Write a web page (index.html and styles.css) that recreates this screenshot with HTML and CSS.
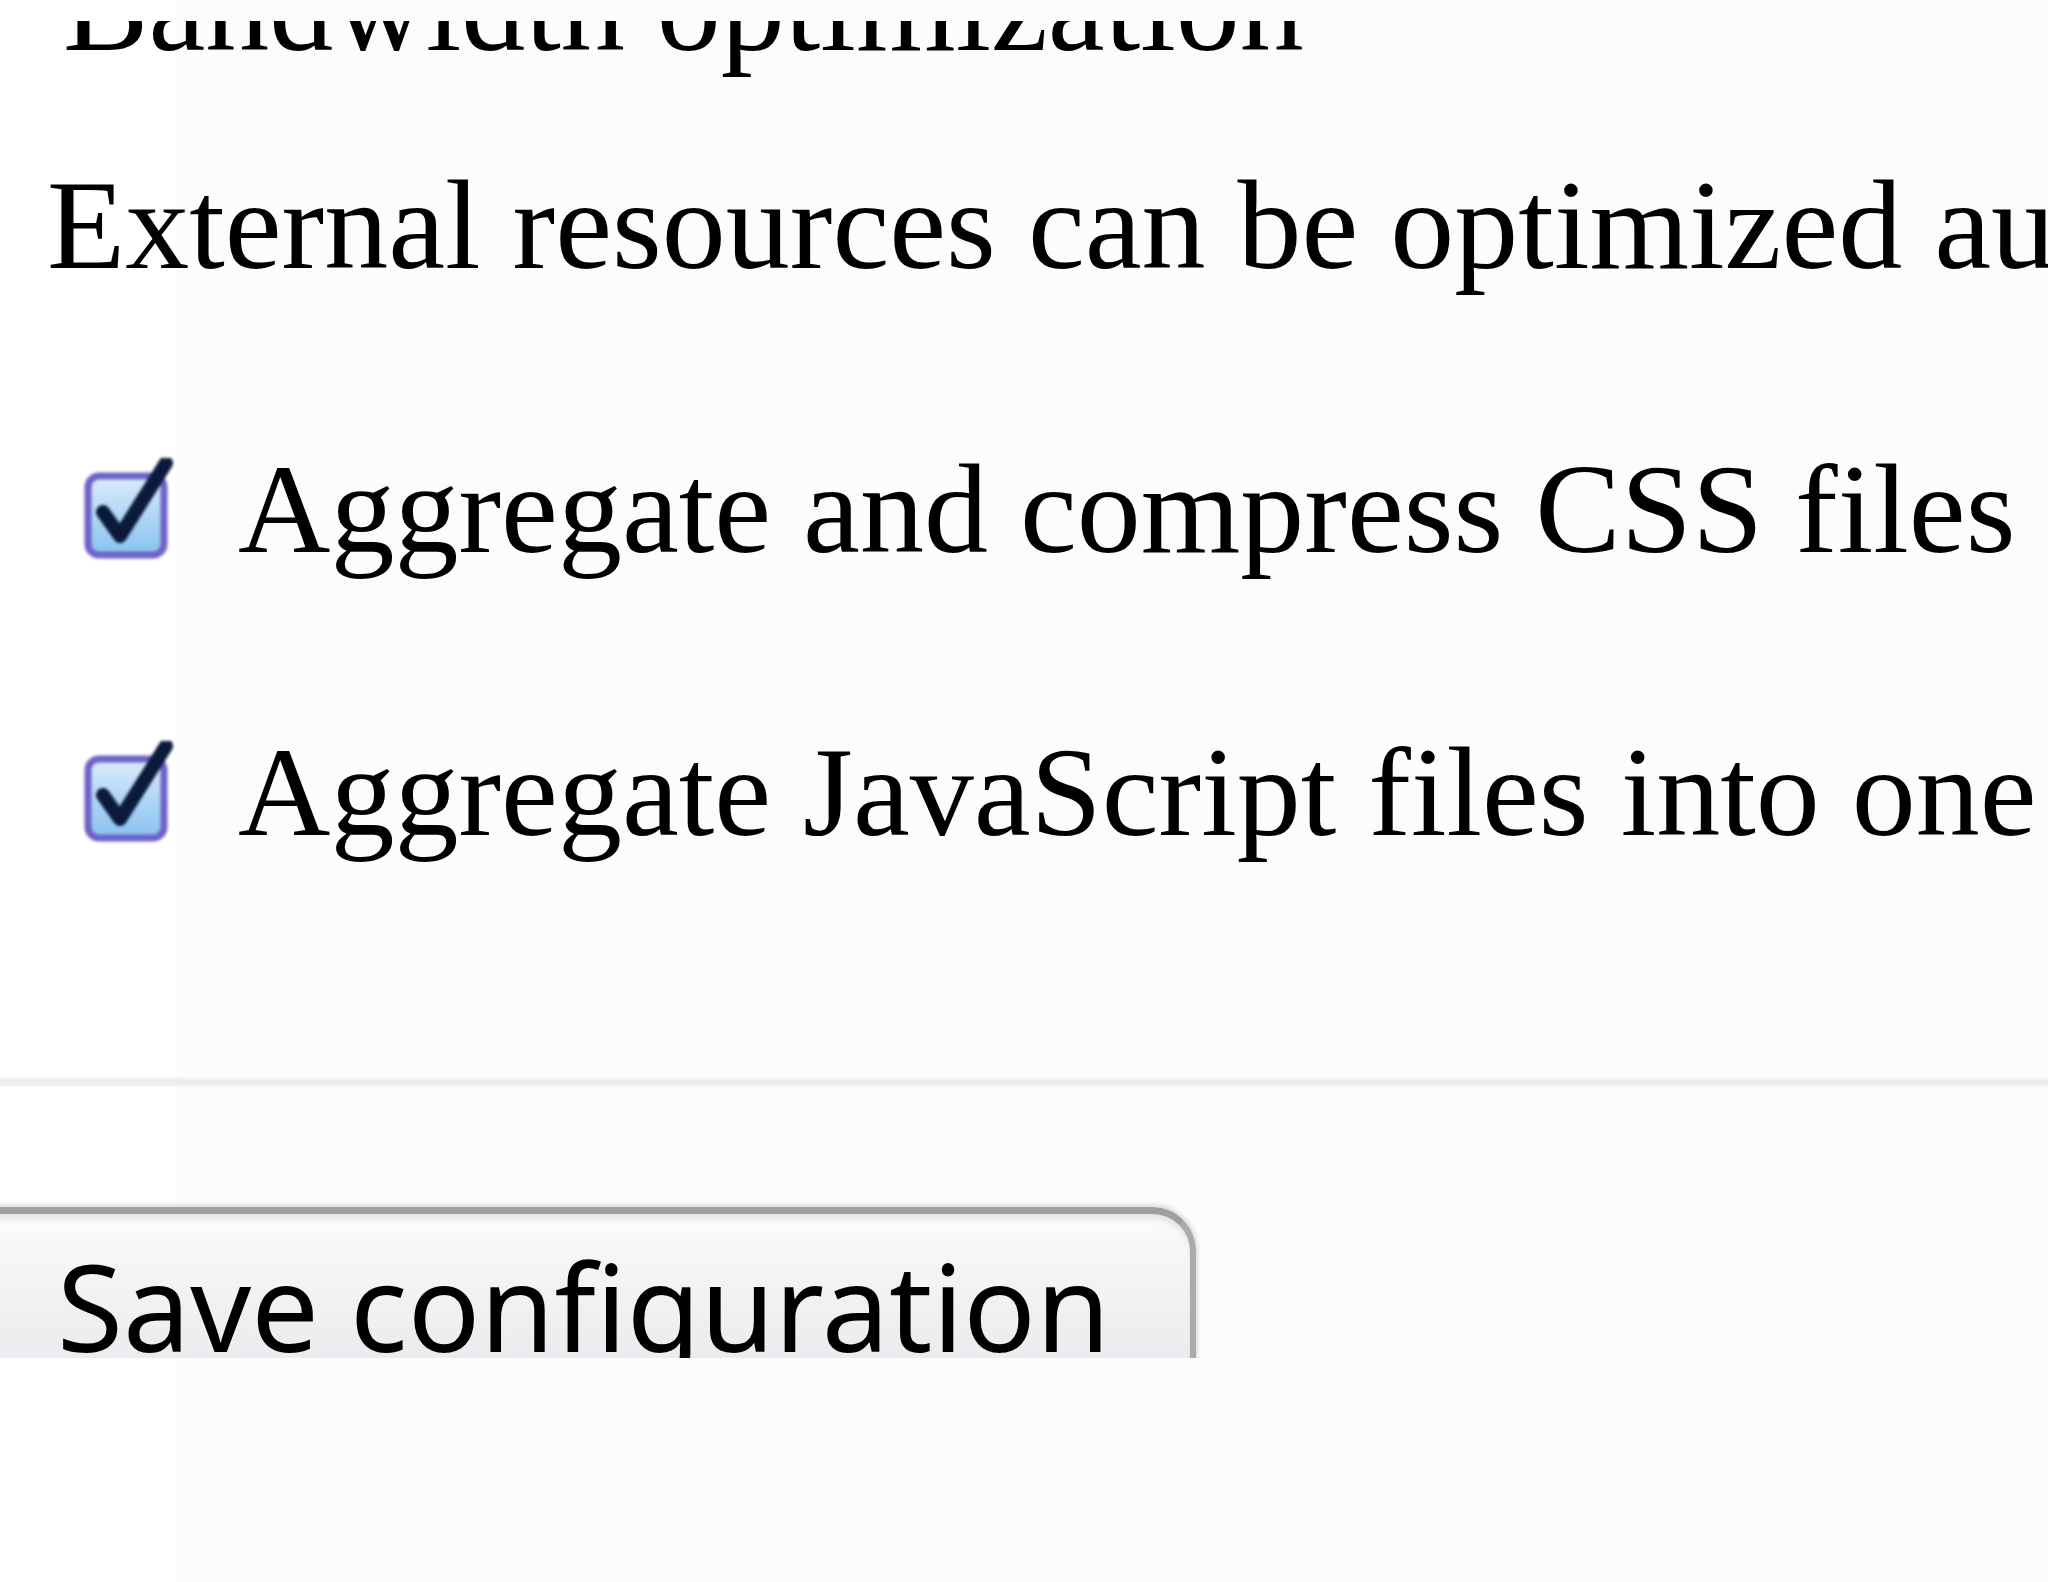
FILE: index.html
```html
<!DOCTYPE html>
<html lang="en">
<head>
<meta charset="utf-8">
<title>Bandwidth optimization</title>
<link rel="stylesheet" href="styles.css">
</head>
<body>
<div class="viewport">
  <div class="page">
    <div class="legend">Bandwidth optimization</div>
    <div class="desc">External resources can be optimized automatically, which can reduce both the size and number of requests made to your website.</div>
    <div class="options">
      <label class="option">
        <svg class="cb" viewBox="0 0 95 105" width="95" height="105" aria-hidden="true">
          <defs>
            <linearGradient id="cbfill1" x1="0" y1="0" x2="0" y2="1">
              <stop offset="0" stop-color="#dcebfb"/>
              <stop offset="1" stop-color="#86c2ef"/>
            </linearGradient>
          </defs>
          <rect x="8" y="18" width="76" height="79" rx="11" fill="url(#cbfill1)" stroke="#6e62c8" stroke-width="7"/>
          <path d="M23 54 L40 78 L86 5" fill="none" stroke="#0b1a3b" stroke-width="14" stroke-linecap="round" stroke-linejoin="round"/>
        </svg>
        <span class="option-label">Aggregate and compress CSS files into one file.</span>
      </label>
      <label class="option">
        <svg class="cb" viewBox="0 0 95 105" width="95" height="105" aria-hidden="true">
          <defs>
            <linearGradient id="cbfill2" x1="0" y1="0" x2="0" y2="1">
              <stop offset="0" stop-color="#dcebfb"/>
              <stop offset="1" stop-color="#86c2ef"/>
            </linearGradient>
          </defs>
          <rect x="8" y="18" width="76" height="79" rx="11" fill="url(#cbfill2)" stroke="#6e62c8" stroke-width="7"/>
          <path d="M23 54 L40 78 L86 5" fill="none" stroke="#0b1a3b" stroke-width="14" stroke-linecap="round" stroke-linejoin="round"/>
        </svg>
        <span class="option-label">Aggregate JavaScript files into one file.</span>
      </label>
    </div>
    <div class="rule"></div>
    <div class="actions">
      <button class="btn" type="button">Save configuration</button>
    </div>
  </div>
</div>
</body>
</html>
```
FILE: styles.css
```css
html, body {
  margin: 0;
  padding: 0;
}

body {
  min-height: 1582px;
  background: linear-gradient(to right, #ffffff 0, #ffffff 177px, #fcfcfd 177px);
  font-family: "Liberation Serif", "Times New Roman", serif;
  color: #000;
}

.viewport {
  margin-top: 21px;
  height: 1337px;
  overflow: hidden;
}

.page {
  font-size: 128px;
  line-height: 128px;
  white-space: nowrap;
}

.legend {
  margin: -78px 0 0 63px;
}

.desc {
  margin: 90px 0 0 47px;
}

.options {
  margin-top: 156px;
  display: flex;
  flex-direction: column;
  gap: 155px;
}

.option {
  display: flex;
  align-items: flex-start;
}

.cb {
  flex: none;
  margin: 13px 0 0 80px;
  filter: blur(1.6px);
}

.option-label {
  margin-left: 63px;
}

.rule {
  margin-top: 221px;
  height: 10px;
  background: linear-gradient(to bottom, #f7f7f8 0, #ececee 35%, #ececee 65%, #f7f7f8 100%);
}

.actions {
  margin-top: 120px;
}

.btn {
  display: block;
  box-sizing: border-box;
  margin: 0 0 0 -40px;
  width: 1236px;
  padding: 32px 0 80px 91px;
  border-style: solid;
  border-width: 7px 6px 0 6px;
  border-color: #a0a0a2 #aaaaac #aaaaac #aaaaac;
  border-radius: 0 44px 0 0;
  background: linear-gradient(to bottom, #fdfdfe 0, #f7f7f9 30px, #f1f1f3 90px, #ebebef 150px);
  box-shadow: 0 -3px 5px rgba(0, 0, 0, 0.10), inset 0 7px 7px -3px rgba(0, 0, 0, 0.12), 2px 0 4px rgba(0, 0, 0, 0.08);
  font-family: "Noto Sans", "Open Sans", sans-serif;
  font-size: 120px;
  line-height: 120px;
  color: #000;
  text-align: left;
  white-space: nowrap;
  cursor: pointer;
}
```
